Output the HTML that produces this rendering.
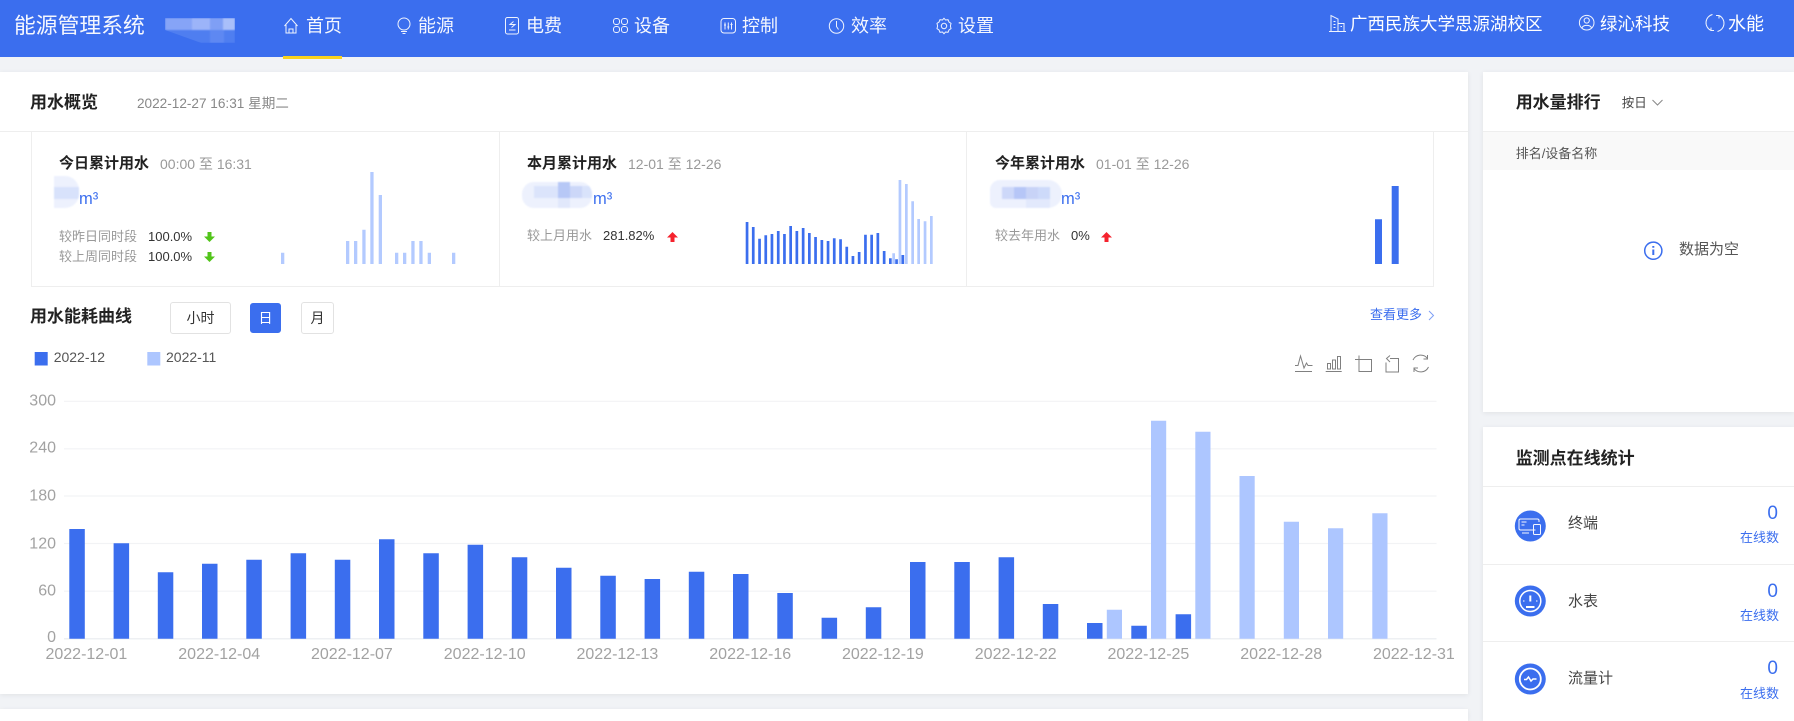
<!DOCTYPE html>
<html lang="zh">
<head>
<meta charset="utf-8">
<title>能源管理系统</title>
<style>
html,body{margin:0;padding:0;width:1794px;height:721px;overflow:hidden;background:#f1f3f6;font-family:"Liberation Sans","Noto Sans CJK SC",sans-serif;color:#333}
#w{position:relative;width:1794px;height:721px;overflow:hidden}
.hd{position:absolute;left:0;top:0;width:1794px;height:57px;background:#3b6eee}
.card{position:absolute;background:#fff;box-shadow:0 1px 5px rgba(0,0,0,.07)}
.t{position:absolute;line-height:20px;white-space:nowrap}
.n{font-size:18px;color:#fff;opacity:.95;top:16px}
.r{font-size:17.5px;color:#fff;top:13.5px}
.h3{font-size:17px;font-weight:700;color:#222}
.st{font-size:15px;font-weight:700;color:#222;top:153.7px}
.sub{font-size:14px;color:#999;top:153.7px}
.cm{font-size:13px;color:#999}
.v{font-size:13px;color:#333}
.m3{font-size:16.5px;color:#3b6eee;top:189px}
.btn{position:absolute;box-sizing:border-box;border:1px solid #e2e2e2;border-radius:3px;background:#fff;font-size:14px;color:#333;text-align:center;line-height:30px}
.blob{position:absolute;overflow:hidden;background:#edf1fd;filter:blur(.7px)}
.blob i{position:absolute;display:block}
.lab{font-size:15px;color:#444}
.zero{font-size:19px;color:#3b6eee;right:16px}
.on{font-size:13px;color:#3b6eee;right:15px}
svg{position:absolute;left:0;top:0}
</style>
</head>
<body>
<div id="w">
<div class="hd"></div>
<div style="position:absolute;left:283px;top:56px;width:59px;height:3px;background:#f8d21f"></div>

<div class="card" style="left:0;top:72px;width:1468px;height:622px"></div>
<div class="card" style="left:0;top:709px;width:1468px;height:12px"></div>
<div class="card" style="left:1483px;top:72px;width:311px;height:340px"></div>
<div class="card" style="left:1483px;top:427px;width:311px;height:294px"></div>

<div style="position:absolute;left:1483px;top:132px;width:311px;height:38px;background:#f9f9f9"></div>

<div class="blob" style="left:165px;top:18px;width:70px;height:25px;background:#4f7ef0;clip-path:polygon(0 0,100% 0,100% 100%,52% 100%,0 48%)">
  <i style="left:0;top:0;width:27px;height:12px;background:#86a4f7"></i>
  <i style="left:27px;top:0;width:18px;height:12px;background:#9cb4f9"></i>
  <i style="left:45px;top:0;width:13px;height:12px;background:#7f9ff5"></i>
  <i style="left:58px;top:0;width:12px;height:12px;background:#a9bffa"></i>
  <i style="left:45px;top:12px;width:14px;height:13px;background:#5e88f2"></i>
</div>

<div class="blob" style="left:54px;top:176px;width:25px;height:32px;border-radius:0 14px 14px 0">
  <i style="left:0;top:11px;width:25px;height:12px;background:#d8e2fb"></i>
</div>
<div class="blob" style="left:522px;top:182px;width:70px;height:26px;border-radius:12px">
  <i style="left:12px;top:4px;width:24px;height:12px;background:#dbe4fb"></i>
  <i style="left:36px;top:0;width:12px;height:16px;background:#b7c8f6"></i>
  <i style="left:48px;top:4px;width:12px;height:12px;background:#ccd7f8"></i>
  <i style="left:60px;top:4px;width:10px;height:12px;background:#d9e3fb"></i>
  <i style="left:36px;top:16px;width:12px;height:10px;background:#e1e8fb"></i>
</div>
<div class="blob" style="left:990px;top:180px;width:72px;height:28px;border-radius:10px 14px 14px 6px">
  <i style="left:12px;top:7px;width:12px;height:12px;background:#cdd8f9"></i>
  <i style="left:24px;top:7px;width:12px;height:12px;background:#b6c6f7"></i>
  <i style="left:36px;top:7px;width:12px;height:12px;background:#c8d3f7"></i>
  <i style="left:48px;top:7px;width:12px;height:12px;background:#cddafa"></i>
  <i style="left:36px;top:19px;width:24px;height:9px;background:#e2e9fc"></i>
</div>

<svg width="1794" height="721" viewBox="0 0 1794 721">
  <g stroke="#eeeeee" stroke-width="1" fill="none">
    <path d="M0 131.5H1468M31.5 131.5V286.5H1433.5V131.5M499.5 131.5V286.5M966.5 131.5V286.5"/>
    <path d="M1483 131.5H1794M1483 486.5H1794M1483 564.5H1794M1483 641.5H1794"/>
  </g>
  <g stroke="#f2f3f5" stroke-width="1.2">
    <path d="M64 401.3H1436.5M64 448.8H1436.5M64 496H1436.5M64 543.5H1436.5M64 591.2H1436.5"/>
  </g>
  <path d="M64 638.7H1436.5" stroke="#eef0f3" stroke-width="1.5"/>
  <path fill="#3b6eee" d="M69.3 529V638.7h15.5V529zM113.6 543.3V638.7h15.5V543.3zM157.8 572.3V638.7h15.5V572.3zM202 563.7V638.7h15.5V563.7zM246.3 559.7V638.7h15.5V559.7zM290.6 553.3V638.7h15.5V553.3zM334.8 559.7V638.7h15.5V559.7zM379 539.3V638.7h15.5V539.3zM423.3 553.3V638.7h15.5V553.3zM467.6 544.7V638.7h15.5V544.7zM511.8 557.3V638.7h15.5V557.3zM556 567.7V638.7h15.5V567.7zM600.3 575.7V638.7h15.5V575.7zM644.6 579V638.7h15.5V579zM688.8 571.7V638.7h15.5V571.7zM733 574V638.7h15.5V574zM777.3 593V638.7h15.5V593zM821.6 617.7V638.7h15.5V617.7zM865.8 607.3V638.7h15.5V607.3zM910 562V638.7h15.5V562zM954.3 562V638.7h15.5V562zM998.6 557.3V638.7h15.5V557.3zM1042.8 604V638.7h15.5V604zM1087 623V638.7h15.5V623zM1131.3 625.7V638.7h15.5V625.7zM1175.6 614.3V638.7h15.5V614.3z"/>
  <path fill="#adc6ff" d="M1106.8 609.7V638.7h15.2V609.7zM1151 420.7V638.7h15.2V420.7zM1195.3 431.7V638.7h15.2V431.7zM1239.5 476V638.7h15.2V476zM1283.8 521.7V638.7h15.2V521.7zM1328 528.3V638.7h15.2V528.3zM1372.3 513.3V638.7h15.2V513.3z"/>
  <g font-family="'Liberation Sans','Noto Sans CJK SC',sans-serif" font-size="16" fill="#a2a2a2">
    <g text-anchor="end">
      <text x="56" y="405.5">300</text><text x="56" y="452.5">240</text><text x="56" y="500.5">180</text><text x="56" y="548.5">120</text><text x="56" y="595.5">60</text><text x="56" y="642">0</text>
    </g>
    <g text-anchor="middle">
      <text x="86.4" y="659">2022-12-01</text><text x="219.2" y="659">2022-12-04</text><text x="351.9" y="659">2022-12-07</text><text x="484.7" y="659">2022-12-10</text><text x="617.4" y="659">2022-12-13</text><text x="750.2" y="659">2022-12-16</text><text x="882.9" y="659">2022-12-19</text><text x="1015.7" y="659">2022-12-22</text><text x="1148.4" y="659">2022-12-25</text><text x="1281.2" y="659">2022-12-28</text><text x="1413.9" y="659">2022-12-31</text>
    </g>
  </g>
  <path fill="#b3caff" d="M281 252.7V264h3.3V252.7zM346 241V264h3.3V241zM354 241V264h3.3V241zM362.3 229.7V264h3.3V229.7zM370.3 172V264h3.3V172zM378.7 195V264h3.3V195zM395 252.7V264h3.3V252.7zM403 252.7V264h3.3V252.7zM411.3 241V264h3.3V241zM419.3 241V264h3.3V241zM427.7 252.7V264h3.3V252.7zM452 252.7V264h3.3V252.7z"/>
  <path fill="#3b6eee" d="M745.7 222V264h2.7V222zM751.9 227V264h2.7V227zM758.2 238.7V264h2.7V238.7zM764.4 235.3V264h2.7V235.3zM770.6 234V264h2.7V234zM776.9 231V264h2.7V231zM783.1 234V264h2.7V234zM789.3 226V264h2.7V226zM795.5 231V264h2.7V231zM801.8 228V264h2.7V228zM808 233V264h2.7V233zM814.2 237V264h2.7V237zM820.5 240V264h2.7V240zM826.7 241V264h2.7V241zM832.9 238.3V264h2.7V238.3zM839.2 239.3V264h2.7V239.3zM845.4 246.7V264h2.7V246.7zM851.6 256V264h2.7V256zM857.8 252V264h2.7V252zM864.1 234.7V264h2.7V234.7zM870.3 234.7V264h2.7V234.7zM876.5 233V264h2.7V233zM882.8 251V264h2.7V251zM889 258.3V264h2.7V258.3zM895.2 259.3V264h2.7V259.3zM901.5 255V264h2.7V255z"/>
  <path fill="#b3caff" d="M892.3 253.3V264h2.7V253.3zM898.6 180V264h2.7V180zM905 184V264h2.7V184zM911.3 201.3V264h2.7V201.3zM917.3 219V264h2.7V219zM923.7 221.3V264h2.7V221.3zM930 216V264h2.7V216z"/>
  <path fill="#3b6eee" d="M1375 219.3V264h7V219.3zM1391.7 186V264h7V186z"/>
  <path fill="#52c41a" d="M207.5 232h4v4.500h3.500l-5.500 5.500-5.500-5.500h3.500z"/>
  <path fill="#52c41a" d="M207.5 252h4v4.500h3.500l-5.500 5.500-5.500-5.500h3.500z"/>
  <path fill="#f5222d" d="M672.5 232l5.500 5.500h-3.500v4.500h-4v-4.500H667z"/>
  <path fill="#f5222d" d="M1106.5 232l5.500 5.500h-3.500v4.500h-4v-4.500H1101z"/>
  <rect x="34.7" y="352" width="13" height="13.5" fill="#3b6eee"/>
  <rect x="147.3" y="352" width="13" height="13.5" fill="#adc6ff"/>
  <path d="M1429 311l4.500 4.500-4.500 4.500" fill="none" stroke="#7f9ff5" stroke-width="1"/>
  <path d="M1652.5 100l5 5 5-5" fill="none" stroke="#888" stroke-width="1"/>
  <g fill="none" stroke="#808080" stroke-width="1">
    <path d="M1295 371.500h17M1295 365.500h3l2.500-9.500 3.500 12 2.500-5 1.500 2.500h4.500"/>
    <path d="M1325.700 371.500h16M1327.500 363.500h3v5.500h-3zM1332.500 360h3v9h-3zM1337.500 356.500h3v12.500h-3z"/>
    <path d="M1355 359.500h16.500v12h-12.500v-16"/>
    <path d="M1386 362.500v9.500h12.500V358.500H1390M1390 355.500l-3.500 3 3.500 3.500"/>
    <path d="M1413 360a8.500 8.500 0 0 1 14.500-1.500M1428.500 367a8.500 8.500 0 0 1-14.500 1.500M1427.500 355v4h-4M1414 372v-4h4"/>
  </g>
  <circle cx="1653.300" cy="250.700" r="8.600" fill="none" stroke="#3b6eee" stroke-width="1.500"/>
  <path d="M1653.300 249.500v5.500M1653.300 246v1.800" stroke="#3b6eee" stroke-width="2" fill="none"/>
  <g fill="none" stroke="#fff" stroke-width="1" opacity=".92">
    <path d="M284.500 26l6.500-7.500 6.500 7.500M286 25v8h10v-8M289 33v-4h4v4"/>
    <circle cx="404" cy="24" r="6"/><path d="M401 31.500h6M402.500 33.500h3"/>
    <rect x="505.500" y="17.500" width="13" height="16.500" rx="2"/><path d="M513.500 21.500l-3.500 3h5l-3.500 3M509 30h6.500"/>
    <rect x="613.500" y="18.500" width="6" height="6" rx="2.500"/><rect x="621.500" y="18.500" width="6" height="6" rx="2.500"/><rect x="613.500" y="26.500" width="6" height="6" rx="2.500"/><rect x="621.500" y="26.500" width="6" height="6" rx="2.500"/>
    <rect x="721" y="18.500" width="14.500" height="14.500" rx="3"/><path d="M725 22.500v7M728.300 22.500v7M731.500 22.500v7M724 25h2M727.300 27h2M730.500 24.500h2"/>
    <circle cx="836.500" cy="26" r="7.200"/><path d="M836.500 21v5.500l2 3"/>
    <path d="M944 18.300l1.500 1.700 2.500-.3 1 2.300 2 1.300-.6 2.700.6 2.700-2 1.300-1 2.300-2.500-.3-1.500 1.700-1.500-1.700-2.500.3-1-2.300-2-1.300.6-2.700-.6-2.700 2-1.300 1-2.300 2.500.3z"/><circle cx="944" cy="26" r="2.700"/>
    <path d="M1329 31.500h17M1331 31.500V15.500l7 3.500v12.500M1338 23.500h6v8M1333.500 21.500h2M1333.500 24.500h2M1333.500 27.500h2M1340.500 26.500h1.500"/>
    <circle cx="1586.700" cy="22.700" r="7.300"/><circle cx="1586.700" cy="20.500" r="2.600"/><path d="M1582 28c1-3.500 8.500-3.500 9.500 0"/>
    <path d="M1712.500 14.500A8.500 8.500 0 0 0 1711 30.500M1717.500 31.500A8.500 8.500 0 0 0 1719 15.500M1719 15.500v3M1719 15.500h-3M1711 30.500v-3M1711 30.500h3"/>
  </g>
  <circle cx="1530.300" cy="526" r="15.500" fill="#3b6eee"/>
  <g fill="none" stroke="#fff" stroke-width="1" opacity=".95">
    <path d="M1535.500 530h-15a1.500 1.500 0 0 1-1.500-1.500v-8a1.500 1.500 0 0 1 1.500-1.500h17a1.500 1.500 0 0 1 1.500 1.500v1.500"/>
    <rect x="1533.500" y="524.500" width="7" height="10" rx="1"/>
    <path d="M1521.500 522h5M1521.500 525h3M1522 533h7"/>
  </g>
  <circle cx="1530.300" cy="601" r="15.500" fill="#3b6eee"/>
  <g fill="none" stroke="#fff">
    <circle cx="1530.300" cy="601" r="10.500" stroke-width="1.500"/>
    <path d="M1530.300 595.500v6" stroke-width="2"/>
    <path d="M1526 607h8.500" stroke-width="2"/>
    <path d="M1523 601h1.500M1536 601h1.500" stroke-width="1"/>
  </g>
  <circle cx="1530.300" cy="679" r="15.500" fill="#3b6eee"/>
  <g fill="none" stroke="#fff">
    <circle cx="1530.300" cy="679" r="10.500" stroke-width="1.800"/>
    <path d="M1524 679.500h2.500l2-2.500 2.500 4 2-2h3.500" stroke-width="1.500"/>
  </g>
</svg>

<div class="t" style="left:14px;top:15.500px;font-size:21.800px;color:#fff;opacity:.95">能源管理系统</div>
<div class="t n" style="left:306px">首页</div>
<div class="t n" style="left:418px">能源</div>
<div class="t n" style="left:526px">电费</div>
<div class="t n" style="left:634px">设备</div>
<div class="t n" style="left:742px">控制</div>
<div class="t n" style="left:851px">效率</div>
<div class="t n" style="left:958px">设置</div>
<div class="t r" style="left:1350px">广西民族大学思源湖校区</div>
<div class="t r" style="left:1600px">绿沁科技</div>
<div class="t r" style="left:1728px;font-size:18px">水能</div>

<div class="t h3" style="left:30px;top:93px">用水概览</div>
<div class="t" style="left:137px;top:94px;font-size:13.600px;color:#888">2022-12-27 16:31 星期二</div>

<div class="t st" style="left:59px">今日累计用水</div>
<div class="t sub" style="left:160px">00:00 至 16:31</div>
<div class="t m3" style="left:79px">m³</div>
<div class="t cm" style="left:59px;top:226.500px">较昨日同时段</div>
<div class="t v" style="left:148px;top:226.500px">100.0%</div>
<div class="t cm" style="left:59px;top:247px">较上周同时段</div>
<div class="t v" style="left:148px;top:247px">100.0%</div>

<div class="t st" style="left:527px">本月累计用水</div>
<div class="t sub" style="left:628px">12-01 至 12-26</div>
<div class="t m3" style="left:593px">m³</div>
<div class="t cm" style="left:527px;top:226px">较上月用水</div>
<div class="t v" style="left:603px;top:226px">281.82%</div>

<div class="t st" style="left:995px">今年累计用水</div>
<div class="t sub" style="left:1096px">01-01 至 12-26</div>
<div class="t m3" style="left:1061px">m³</div>
<div class="t cm" style="left:995px;top:226px">较去年用水</div>
<div class="t v" style="left:1071px;top:226px">0%</div>

<div class="t h3" style="left:30px;top:307px">用水能耗曲线</div>
<div class="btn" style="left:170px;top:302px;width:61px;height:32px">小时</div>
<div class="btn" style="left:250px;top:303px;width:31px;height:30px;background:#3b6eee;border-color:#3b6eee;color:#fff;line-height:28px">日</div>
<div class="btn" style="left:301px;top:302px;width:33px;height:32px">月</div>
<div class="t" style="left:1370px;top:305px;font-size:13px;color:#3b6eee">查看更多</div>
<div class="t" style="left:53.700px;top:347px;font-size:14px;color:#555">2022-12</div>
<div class="t" style="left:166px;top:347px;font-size:14px;color:#555">2022-11</div>

<div class="t h3" style="left:1515.700px;top:92.700px">用水量排行</div>
<div class="t" style="left:1621.700px;top:93px;font-size:12.500px;color:#444">按日</div>
<div class="t" style="left:1515.700px;top:143.700px;font-size:13px;color:#555">排名/设备名称</div>
<div class="t" style="left:1679px;top:240px;font-size:15px;color:#555">数据为空</div>

<div class="t h3" style="left:1515.700px;top:448.700px">监测点在线统计</div>
<div class="t lab" style="left:1568px;top:514px">终端</div>
<div class="t zero" style="top:504px">0</div>
<div class="t on" style="top:528px">在线数</div>
<div class="t lab" style="left:1568px;top:592px">水表</div>
<div class="t zero" style="top:582px">0</div>
<div class="t on" style="top:606px">在线数</div>
<div class="t lab" style="left:1568px;top:669px">流量计</div>
<div class="t zero" style="top:659px">0</div>
<div class="t on" style="top:684px">在线数</div>
</div>
</body>
</html>
